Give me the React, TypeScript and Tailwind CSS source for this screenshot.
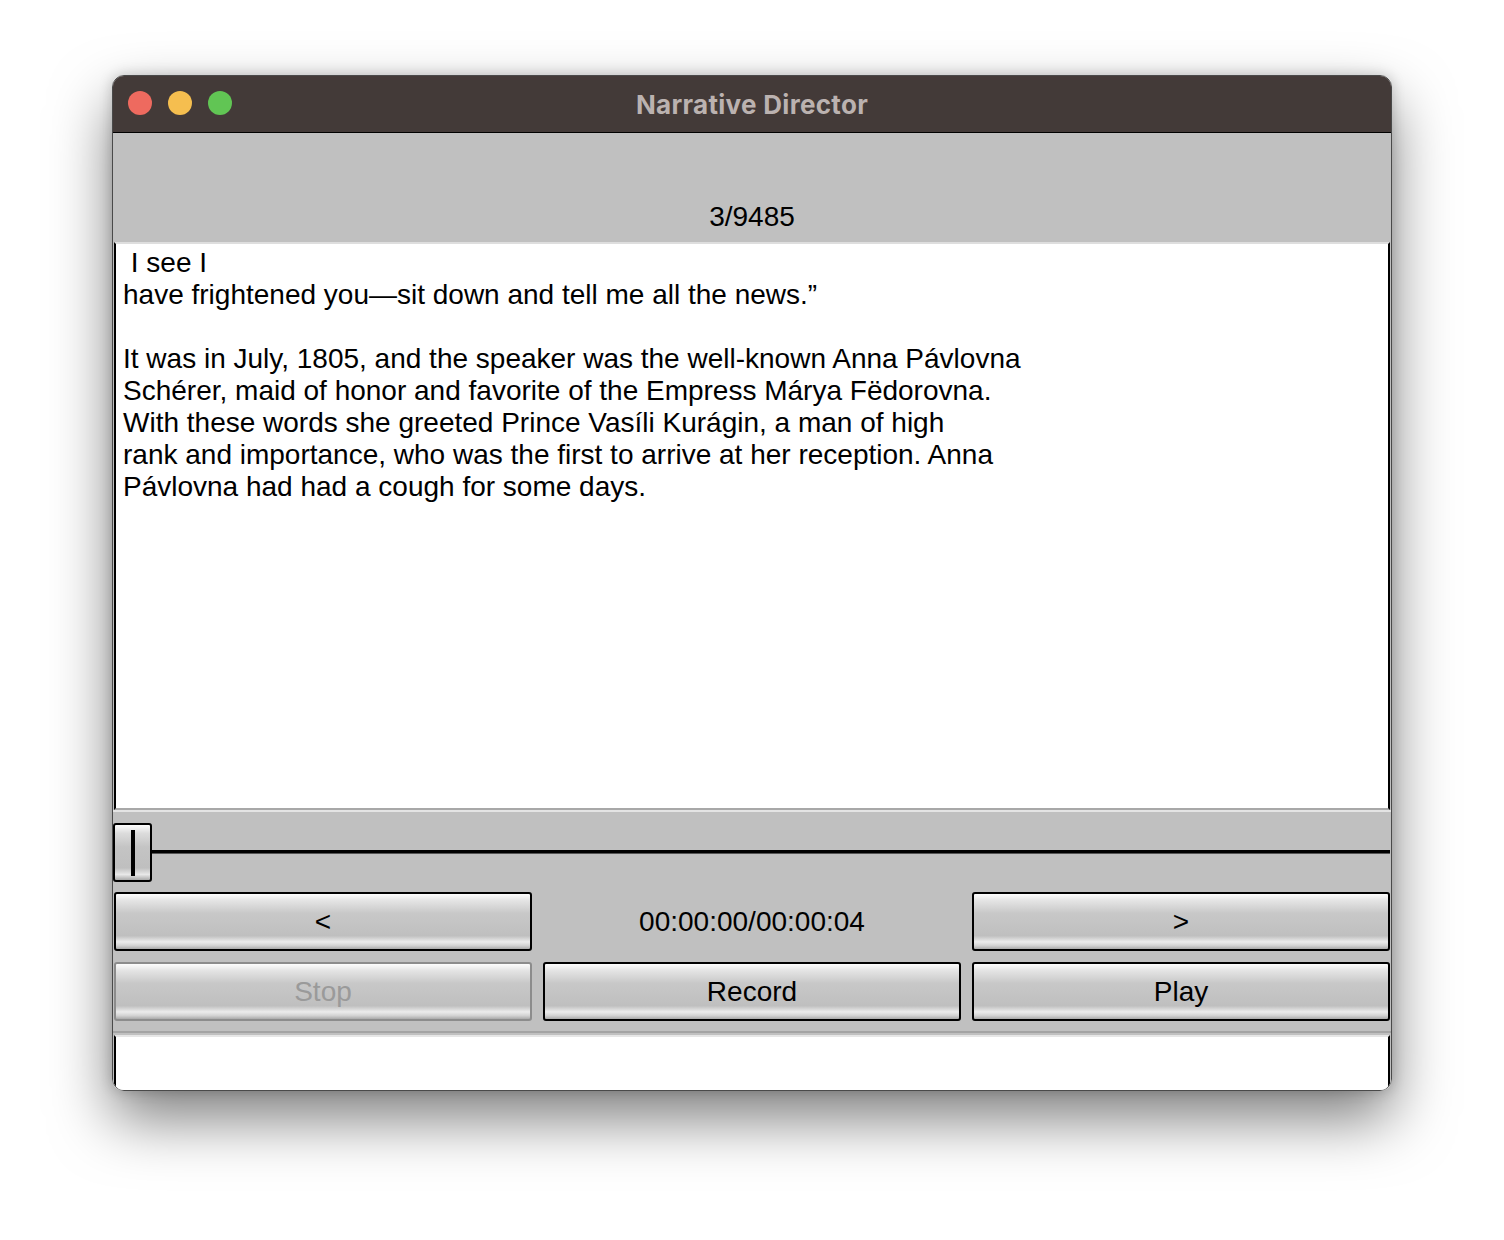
const PASSAGE = [
  " I see I",
  "have frightened you\u2014sit down and tell me all the news.\u201d",
  "",
  "It was in July, 1805, and the speaker was the well-known Anna P\u00e1vlovna",
  "Sch\u00e9rer, maid of honor and favorite of the Empress M\u00e1rya F\u00ebdorovna.",
  "With these words she greeted Prince Vas\u00edli Kur\u00e1gin, a man of high",
  "rank and importance, who was the first to arrive at her reception. Anna",
  "P\u00e1vlovna had had a cough for some days.",
];

const btn =
  "h-[59px] rounded-[3px] border-2 flex items-center justify-center text-[28px] bg-[linear-gradient(to_bottom,#fdfdfd_0%,#e4e4e4_12%,#c8c8c8_35%,#bfbfbf_76%,#ececec_87%,#d2d2d2_94%,#a9a9a9_100%)]";

const Button = ({ label, disabled }: { label: string; disabled?: boolean }) => (
  <div
    className={`${btn} ${
      disabled ? "border-[#8c8c8c] text-[#9a9a9a]" : "border-black text-black"
    }`}
  >
    {label}
  </div>
);

const App = () => {
  return (
    <div className="w-[1504px] h-[1240px] bg-white pt-[75px] font-['Liberation_Sans',Arial,sans-serif]">
      <div className="mx-auto w-[1280px] h-[1016px] rounded-[12px] border border-[#4a4a4a] overflow-hidden flex flex-col shadow-[0_28px_60px_rgba(0,0,0,0.5),0_0_14px_rgba(0,0,0,0.2)]">
        {/* title bar */}
        <div className="relative h-[57px] shrink-0 bg-[#433a38] border-b border-black flex items-center justify-center">
          <div className="absolute left-[15px] top-[15px] flex gap-[16px]">
            <span className="w-[24px] h-[24px] rounded-full bg-[#ee6a5f]" />
            <span className="w-[24px] h-[24px] rounded-full bg-[#f5be4f]" />
            <span className="w-[24px] h-[24px] rounded-full bg-[#61c554]" />
          </div>
          <span className="text-[26px] font-bold tracking-[0.3px] text-[#bbb2b0] font-['Inter',sans-serif]">
            Narrative Director
          </span>
        </div>

        <div className="flex-1 bg-[#c0c0c0] flex flex-col">
          {/* counter */}
          <div className="h-[109px] shrink-0 flex items-end justify-center pb-[9px] text-[28px] leading-[32px] text-black">
            3/9485
          </div>

          {/* text area */}
          <div className="h-[568px] shrink-0 ml-[1px] mr-[1px] bg-white border-t-2 border-t-[#dedede] border-b-2 border-b-[#a8a8a8] border-l-2 border-l-black border-r-2 border-r-black pl-[7px] pt-[3px] text-[28px] leading-[32px] text-black whitespace-pre">
            {PASSAGE.map((line, i) => (
              <div key={i} className="h-[32px]">
                {line}
              </div>
            ))}
          </div>

          {/* slider */}
          <div className="h-[82px] shrink-0 flex items-start pt-[11px] border-t-2 border-t-[#e4e4e4]">
            <div className="w-[39px] h-[59px] shrink-0 rounded-[3px] border-2 border-black flex items-center justify-center bg-[linear-gradient(to_bottom,#fdfdfd_0%,#dcdcdc_15%,#c4c4c4_40%,#bfbfbf_78%,#e8e8e8_90%,#a9a9a9_100%)]">
              <div className="w-[4px] h-[46px] bg-black" />
            </div>
            <div className="flex-1 h-[4px] mt-[27px] bg-black mr-[1px] border-b border-b-[#555]" />
          </div>

          {/* buttons */}
          <div className="grid grid-cols-3 gap-x-[11px] gap-y-[11px] pl-[1px] pr-[1px]">
            <Button label="<" />
            <div className="h-[59px] flex items-center justify-center text-[28px] text-black">
              00:00:00/00:00:04
            </div>
            <Button label=">" />
            <Button label="Stop" disabled />
            <Button label="Record" />
            <Button label="Play" />
          </div>

          {/* status */}
          <div className="mt-[10px] border-t-2 border-t-[#a4a4a4] pt-[2px] flex-1 flex flex-col">
            <div className="flex-1 bg-white border-t-2 border-t-[#e6e6e6] border-l-2 border-l-black border-r-2 border-r-black ml-[1px] mr-[1px]" />
          </div>
        </div>
      </div>
    </div>
  );
};

export default App;
